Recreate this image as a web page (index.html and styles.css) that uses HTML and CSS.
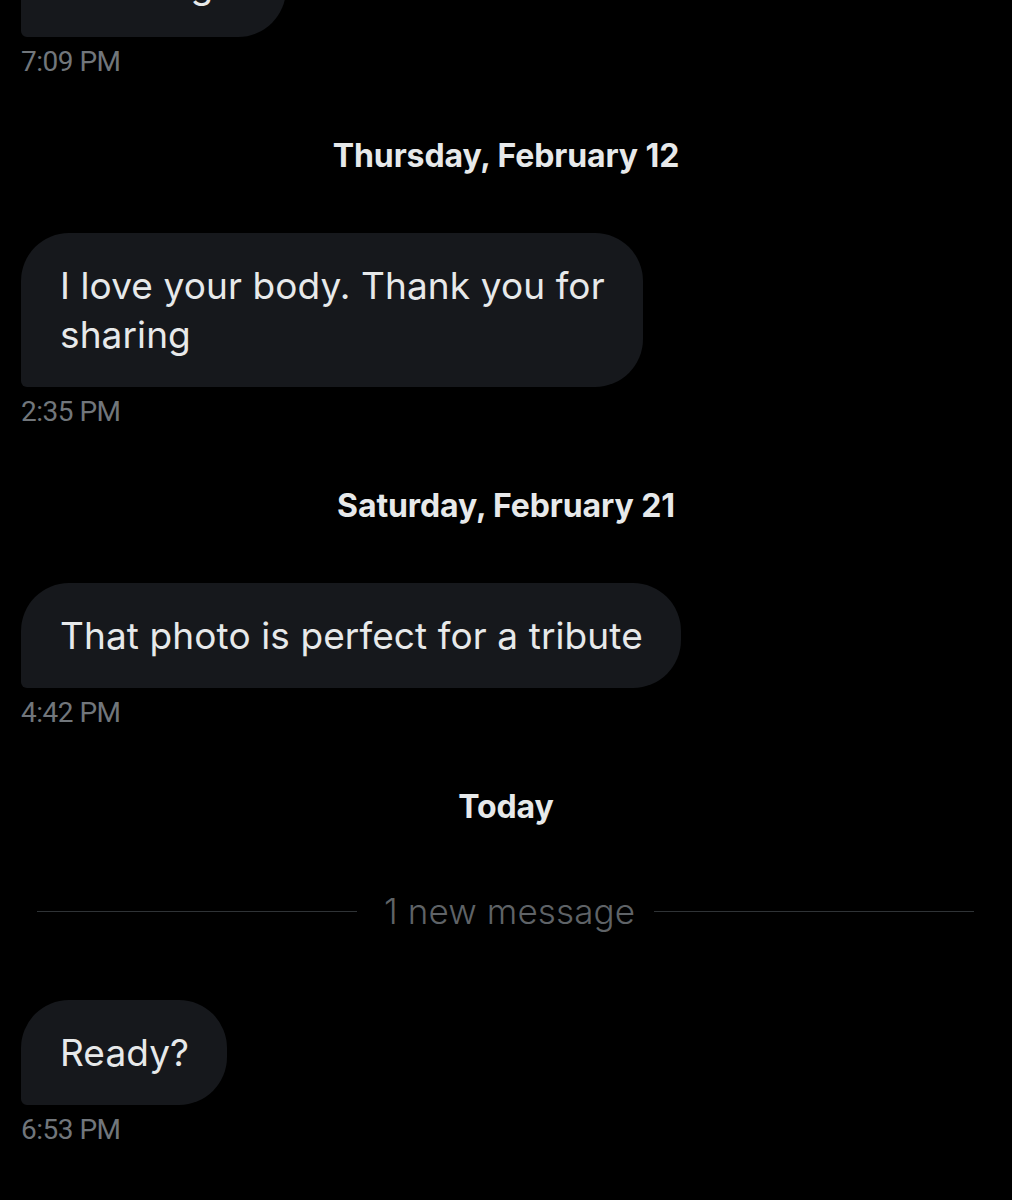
FILE: index.html
```html
<!DOCTYPE html>
<html>
<head>
  <title>Messages</title>
  <link rel="stylesheet" href="styles.css">
</head>
<body>

  <div class="chat">

    <div class="msg first">
      <div class="bubble">Amazing</div>
      <div class="time">7:09 PM</div>
    </div>

    <div class="day">Thursday, February 12</div>

    <div class="msg">
      <div class="bubble">I love your body. Thank you for<br>sharing</div>
      <div class="time">2:35 PM</div>
    </div>

    <div class="day">Saturday, February 21</div>

    <div class="msg">
      <div class="bubble">That photo is perfect for a tribute</div>
      <div class="time">4:42 PM</div>
    </div>

    <div class="day">Today</div>

    <div class="divider">
      <span class="line"></span>
      <span class="label">1 new message</span>
      <span class="line"></span>
    </div>

    <div class="msg last">
      <div class="bubble">Ready?</div>
      <div class="time">6:53 PM</div>
    </div>

  </div>

</body>
</html>
```

FILE: styles.css
```css
body {
  margin: 0;
  background-color: #000;
  font-family: "Inter", "Roboto", sans-serif;
  color: #e7e9ea;
  overflow: hidden;
}

.chat {
  display: flex;
  flex-direction: column;
  padding: 0 38px 0 21px;
}

.msg {
  display: flex;
  flex-direction: column;
  align-items: flex-start;
}

.msg.first {
  margin-top: -68px;
}

.bubble {
  background-color: #16181c;
  border-radius: 48px 48px 48px 6px; /* esquina inferior izquierda casi recta */
  padding: 28px 38px 28px 39px;
  max-width: 640px;
  font-size: 37px;
  line-height: 49px;
  letter-spacing: 0.1px;
}

.msg.first .bubble {
  padding-right: 73px;
}

.time {
  margin-top: 9px;
  font-family: "Roboto", sans-serif;
  font-size: 28px;
  line-height: 32px;
  letter-spacing: -0.5px;
  color: #71767b;
}

.day {
  margin: 60px 0 59px;
  padding-left: 17px;
  text-align: center;
  font-size: 32px;
  line-height: 36px;
  font-weight: 700;
  letter-spacing: -0.1px;
  color: #e7e9ea;
}

.divider {
  display: flex;
  align-items: center;
  gap: 19px;
  margin: 7px 0 69px 16px;
  height: 40px;
}

.divider .line {
  flex: 1;
  height: 1px;
  background-color: #2f3336;
}

.divider .label {
  padding-left: 8px;
  font-size: 35px;
  font-weight: 300;
  letter-spacing: 0.1px;
  color: #5f6367;
}
```
